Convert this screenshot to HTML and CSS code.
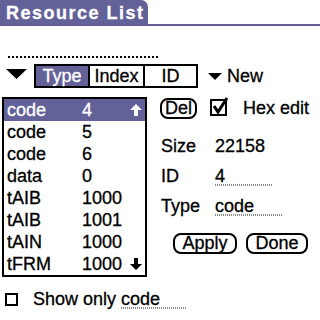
FILE: index.html
```html
<!DOCTYPE html>
<html lang="en">
<head>
    <meta charset="UTF-8">
    <meta name="viewport" content="width=device-width, initial-scale=1.0">
    <title>Resource List</title>
    <link rel="stylesheet" href="styles.css">
</head>
<body>
    <div class="screen">
        <div class="titlebar">
            <div class="title">Resource List</div>
        </div>
        <div class="dots"></div>
        <div class="tabrow">
            <svg class="tri" width="21" height="10" viewBox="0 0 21 10"><polygon points="0,0 21,0 10.5,10"/></svg>
            <div class="tabs">
                <div class="tab tab-on tab-type">Type</div>
                <div class="tab tab-index">Index</div>
                <div class="tab tab-id">ID</div>
            </div>
            <div class="newpick">
                <svg width="14" height="7" viewBox="0 0 14 7"><polygon points="0,0 14,0 7,7"/></svg>
                <span>New</span>
            </div>
        </div>
        <div class="main">
            <div class="list">
                <div class="row row-on"><span class="rname">code</span><span class="rid">4</span>
                    <svg class="arrow" width="12" height="12" viewBox="0 0 12 12"><polygon points="6,0 12,6 8,6 8,12 4,12 4,6 0,6"/></svg></div>
                <div class="row"><span class="rname">code</span><span class="rid">5</span></div>
                <div class="row"><span class="rname">code</span><span class="rid">6</span></div>
                <div class="row"><span class="rname">data</span><span class="rid">0</span></div>
                <div class="row"><span class="rname">tAIB</span><span class="rid">1000</span></div>
                <div class="row"><span class="rname">tAIB</span><span class="rid">1001</span></div>
                <div class="row"><span class="rname">tAIN</span><span class="rid">1000</span></div>
                <div class="row"><span class="rname">tFRM</span><span class="rid">1000</span>
                    <svg class="arrow" width="12" height="12" viewBox="0 0 12 12"><polygon points="4,0 8,0 8,6 12,6 6,12 0,6 4,6"/></svg></div>
            </div>
            <div class="side">
                <div class="toprow">
                    <div class="btn btn-del">Del</div>
                    <svg class="check" width="20" height="20" viewBox="0 0 20 20">
                        <rect x="1" y="3" width="15" height="15" fill="none" stroke="#000" stroke-width="2"/>
                        <path d="M4 9 L8 15 L17 1" fill="none" stroke="#000" stroke-width="3"/>
                    </svg>
                    <span class="hex">Hex edit</span>
                </div>
                <div class="field field-first"><span class="lbl">Size</span><span class="plain">22158</span></div>
                <div class="field"><span class="lbl">ID</span><span class="val val-id">4</span></div>
                <div class="field"><span class="lbl">Type</span><span class="val val-type">code</span></div>
                <div class="btnrow">
                    <div class="btn btn-apply">Apply</div>
                    <div class="btn btn-done">Done</div>
                </div>
            </div>
        </div>
        <div class="footer">
            <div class="box"></div>
            <span class="show">Show only</span>
            <span class="val val-show">code</span>
        </div>
    </div>
</body>
</html>
```

FILE: styles.css
```css
html {
    font-family: 'Liberation Sans', Arial, sans-serif;
}
body {
    margin: 0;
    background: #fff;
    color: #000;
}
.screen {
    width: 320px;
    height: 320px;
    overflow: hidden;
    font-size: 18px;
    -webkit-text-stroke: 0.3px currentColor;
}
.titlebar {
    height: 24px;
    border-bottom: 2px solid #626299;
    display: flex;
}
.title {
    width: 142px;
    padding: 2px 0 0 6px;
    background-color: #626299;
    color: white;
    font-weight: bold;
    font-size: 18px;
    letter-spacing: 1.5px;
    line-height: 22px;
    border-top-right-radius: 7px;
}
.dots {
    width: 150px;
    height: 2px;
    margin: 30px 0 0 8px;
    background: repeating-linear-gradient(90deg, #000 0 2px, transparent 2px 4px);
}
.tabrow {
    display: flex;
    align-items: center;
    height: 24px;
    margin-top: 6px;
}
.tri {
    margin: 0 7px 4px 6px;
}
.tabs {
    display: flex;
    width: 160px;
    height: 20px;
    border: 2px solid #000;
}
.tab {
    line-height: 20px;
    text-align: center;
}
.tab + .tab {
    border-left: 2px solid #000;
}
.tab-type {
    width: 52px;
}
.tab-index {
    width: 53px;
}
.tab-id {
    width: 51px;
}
.tab-on {
    background-color: #626299;
    color: white;
}
.newpick {
    display: flex;
    align-items: center;
    gap: 5px;
    margin-left: 10px;
}
.main {
    display: flex;
    margin-top: 9px;
}
.list {
    width: 141px;
    margin-left: 2px;
    border: 2px solid #000;
}
.row {
    display: flex;
    align-items: center;
    height: 22px;
    padding-left: 3px;
}
.row-on {
    background-color: #626299;
    color: white;
}
.rname {
    width: 75px;
}
.rid {
    width: 48px;
}
.arrow {
    fill: currentColor;
}
.side {
    margin-left: 13px;
}
.toprow {
    display: flex;
    align-items: center;
    height: 22px;
}
.btn {
    height: 17px;
    border: 2px solid #000;
    border-radius: 8px;
    line-height: 17px;
    text-align: center;
}
.btn-del {
    width: 33px;
}
.check {
    margin: 0 13px 2px 13px;
}
.field {
    display: flex;
    align-items: center;
    height: 30px;
    padding-left: 1px;
}
.field-first {
    margin-top: 12px;
}
.lbl {
    width: 54px;
}
.val {
    display: inline-block;
    line-height: 20px;
    background-image: repeating-linear-gradient(90deg, #8a8a8a 0 1px, transparent 1px 2px);
    background-size: 100% 2px;
    background-position: bottom;
    background-repeat: no-repeat;
}
.val-id {
    width: 58px;
}
.val-type {
    width: 68px;
}
.btnrow {
    display: flex;
    gap: 9px;
    margin: 12px 0 0 13px;
}
.btn-apply {
    width: 60px;
}
.btn-done {
    width: 58px;
}
.footer {
    display: flex;
    align-items: center;
    height: 22px;
    margin-top: 11px;
}
.box {
    width: 9px;
    height: 9px;
    margin: 0 15px 0 5px;
    border: 2px solid #000;
}
.show {
    margin-right: 5px;
}
.val-show {
    width: 65px;
}
```
